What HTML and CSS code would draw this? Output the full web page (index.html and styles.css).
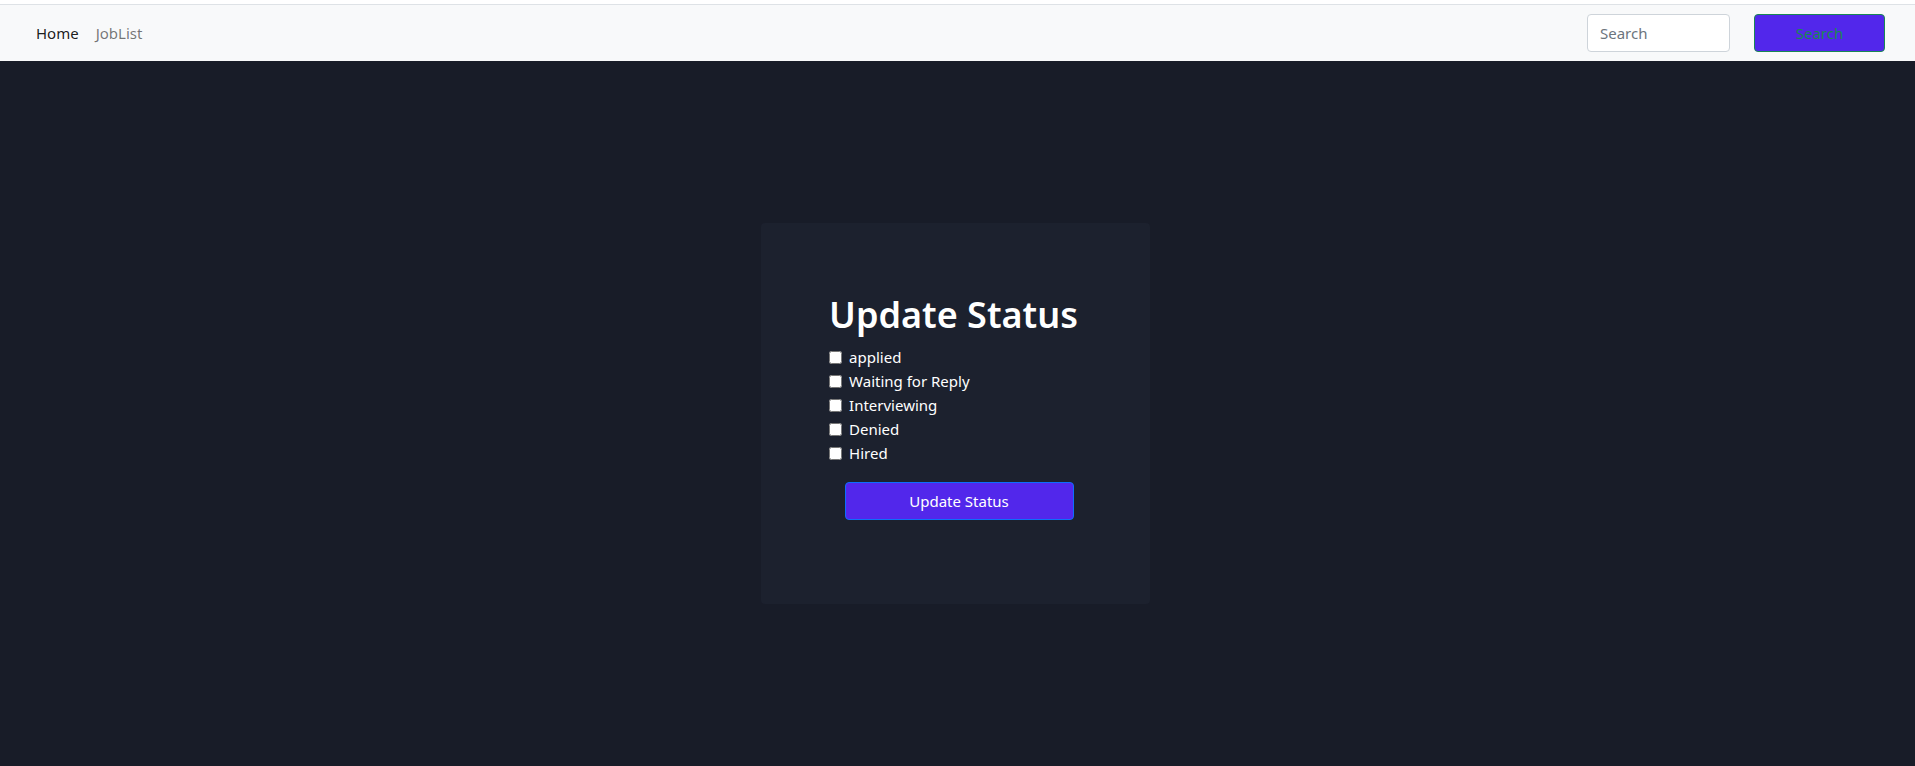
FILE: index.html
```html
<!DOCTYPE html>
<html>
<head>
<meta charset="utf-8">
<link rel="stylesheet" href="styles.css">
</head>
<body>
<nav class="navbar">
  <div class="nav-links">
    <a class="nav-link active" href="#">Home</a>
    <a class="nav-link" href="#">JobList</a>
  </div>
  <form class="nav-search">
    <input class="search-input" type="search" placeholder="Search">
    <button class="search-btn" type="button">Search</button>
  </form>
</nav>
<main class="main">
  <div class="card">
    <div class="card-body">
      <h1 class="title">Update Status</h1>
      <div class="options">
        <label class="option"><input type="checkbox"><span>applied</span></label>
        <label class="option"><input type="checkbox"><span>Waiting for Reply</span></label>
        <label class="option"><input type="checkbox"><span>Interviewing</span></label>
        <label class="option"><input type="checkbox"><span>Denied</span></label>
        <label class="option"><input type="checkbox"><span>Hired</span></label>
      </div>
      <button class="update-btn" type="button">Update Status</button>
    </div>
  </div>
</main>
</body>
</html>
```
FILE: styles.css
```css
* { box-sizing: border-box; }
html, body { margin: 0; padding: 0; height: 100%; }
body {
  font-family: "Noto Sans", "Open Sans", sans-serif;
  font-size: 15px;
  background: #181c28;
  display: flex;
  flex-direction: column;
  padding-top: 4px;
  background-image: linear-gradient(#ffffff, #ffffff);
  background-size: 100% 4px;
  background-repeat: no-repeat;
}
.navbar {
  height: 57px;
  flex: none;
  background: #f8f9fa;
  border-top: 1px solid #dee2e6;
  display: flex;
  align-items: center;
  justify-content: space-between;
  padding: 0 30px 0 36px;
}
.nav-links { display: flex; gap: 17px; }
.nav-link { text-decoration: none; color: rgba(0,0,0,0.55); font-size: 15px; }
.nav-link.active { color: rgba(0,0,0,0.9); }
.nav-search { display: flex; gap: 24px; margin: 0; }
.search-input {
  width: 143px; height: 38px;
  border: 1px solid #ced4da; border-radius: 4px;
  padding: 0 12px;
  font-family: inherit; font-size: 15px;
  background: #fff;
}
.search-input::placeholder { color: #6c757d; }
.search-btn {
  width: 131px; height: 38px;
  background: #5227eb;
  border: 1px solid #198754;
  border-radius: 4px;
  color: #198754;
  font-family: inherit; font-size: 15px;
}
.main {
  flex: 1;
  display: flex;
  align-items: center;
  justify-content: center;
}
.card {
  width: 389px; height: 381px;
  margin-right: 4px;
  background: #1c212e;
  border-radius: 4px;
  display: flex;
  justify-content: center;
  padding-top: 70px;
}
.card-body { display: flex; flex-direction: column; margin-left: -4px; }
.title {
  margin: 0 0 9px 0;
  color: #fff;
  font-size: 36px;
  font-weight: 600;
  line-height: 1.2;
}
.options { display: flex; flex-direction: column; }
.option {
  display: flex; align-items: center;
  height: 24px;
  color: #fff;
  font-size: 15px;
}
.option input { width: 13px; height: 13px; margin: 0 7px 0 0; }
.update-btn {
  align-self: center;
  margin: 17px 0 0 11px;
  width: 229px; height: 38px;
  background: #5227eb;
  border: 1px solid #0d6efd;
  border-radius: 4px;
  color: #fff;
  font-family: inherit; font-size: 15px;
}
```
